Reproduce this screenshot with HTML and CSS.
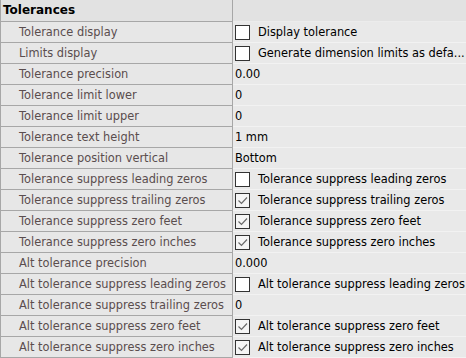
FILE: index.html
```html
<!DOCTYPE html>
<html>
	<head>
		<meta charset="UTF-8">
		<title>Tolerances</title>
		<link rel="stylesheet" href="styles.css">
	</head>
	<body>
		<div class="grid">
			<div class="head name">Tolerances</div>
			<div class="head val"></div>

			<div class="name">Tolerance display</div>
			<div class="val"><span class="ck"></span>Display tolerance</div>

			<div class="name">Limits display</div>
			<div class="val"><span class="ck"></span>Generate dimension limits as defa...</div>

			<div class="name">Tolerance precision</div>
			<div class="val">0.00</div>

			<div class="name">Tolerance limit lower</div>
			<div class="val">0</div>

			<div class="name">Tolerance limit upper</div>
			<div class="val">0</div>

			<div class="name">Tolerance text height</div>
			<div class="val">1 mm</div>

			<div class="name">Tolerance position vertical</div>
			<div class="val">Bottom</div>

			<div class="name">Tolerance suppress leading zeros</div>
			<div class="val"><span class="ck"></span>Tolerance suppress leading zeros</div>

			<div class="name">Tolerance suppress trailing zeros</div>
			<div class="val"><span class="ck on"><svg viewBox="0 0 13 13"><path d="M2.5 6.5 L5.5 9.5 L11 3.5"/></svg></span>Tolerance suppress trailing zeros</div>

			<div class="name">Tolerance suppress zero feet</div>
			<div class="val"><span class="ck on"><svg viewBox="0 0 13 13"><path d="M2.5 6.5 L5.5 9.5 L11 3.5"/></svg></span>Tolerance suppress zero feet</div>

			<div class="name">Tolerance suppress zero inches</div>
			<div class="val"><span class="ck on"><svg viewBox="0 0 13 13"><path d="M2.5 6.5 L5.5 9.5 L11 3.5"/></svg></span>Tolerance suppress zero inches</div>

			<div class="name">Alt tolerance precision</div>
			<div class="val">0.000</div>

			<div class="name">Alt tolerance suppress leading zeros</div>
			<div class="val"><span class="ck"></span>Alt tolerance suppress leading zeros</div>

			<div class="name">Alt tolerance suppress trailing zeros</div>
			<div class="val">0</div>

			<div class="name">Alt tolerance suppress zero feet</div>
			<div class="val"><span class="ck on"><svg viewBox="0 0 13 13"><path d="M2.5 6.5 L5.5 9.5 L11 3.5"/></svg></span>Alt tolerance suppress zero feet</div>

			<div class="name">Alt tolerance suppress zero inches</div>
			<div class="val"><span class="ck on"><svg viewBox="0 0 13 13"><path d="M2.5 6.5 L5.5 9.5 L11 3.5"/></svg></span>Alt tolerance suppress zero inches</div>
		</div>
	</body>
</html>
```

FILE: styles.css
```css
*{
	margin: 0;
	padding: 0;
	box-sizing: border-box;
}
body{
	background: #e8e8e8;
	font-family: "DejaVu Sans", sans-serif;
	font-size: 11.4px;
	overflow: hidden;
}
.grid{
	display: grid;
	grid-template-columns: 233px 1fr;
	width: 466px;
}
.name{
	height: 21px;
	line-height: 20px;
	padding-left: 18px;
	color: #5a4d4e;
	background: #e7e7e7;
	border-left: 1px solid #a7a7a7;
	border-right: 1px solid #a7a7a7;
	border-bottom: 1px solid #a7a7a7;
	white-space: nowrap;
	overflow: hidden;
}
.val{
	height: 21px;
	padding-left: 2px;
	display: flex;
	align-items: center;
	color: #000;
	background: #e9e9e9;
	border-bottom: 1px solid #f2f2f2;
	white-space: nowrap;
	overflow: hidden;
}
.head{
	height: 22px;
	line-height: 21px;
	background: #e2e2e2;
}
.head.name{
	padding-left: 2px;
	color: #000;
	font-weight: bold;
	font-size: 12px;
}
.head.val{
	border-bottom: 1px solid #ececec;
}
.ck{
	flex: none;
	width: 15px;
	height: 15px;
	margin-right: 8px;
	border: 1px solid #333;
	background: #fff;
	display: flex;
}
.ck.on{
	background: #f5f5f5;
}
.ck svg{
	width: 13px;
	height: 13px;
	fill: none;
	stroke: #6a6a6a;
	stroke-width: 1.2;
}
```
